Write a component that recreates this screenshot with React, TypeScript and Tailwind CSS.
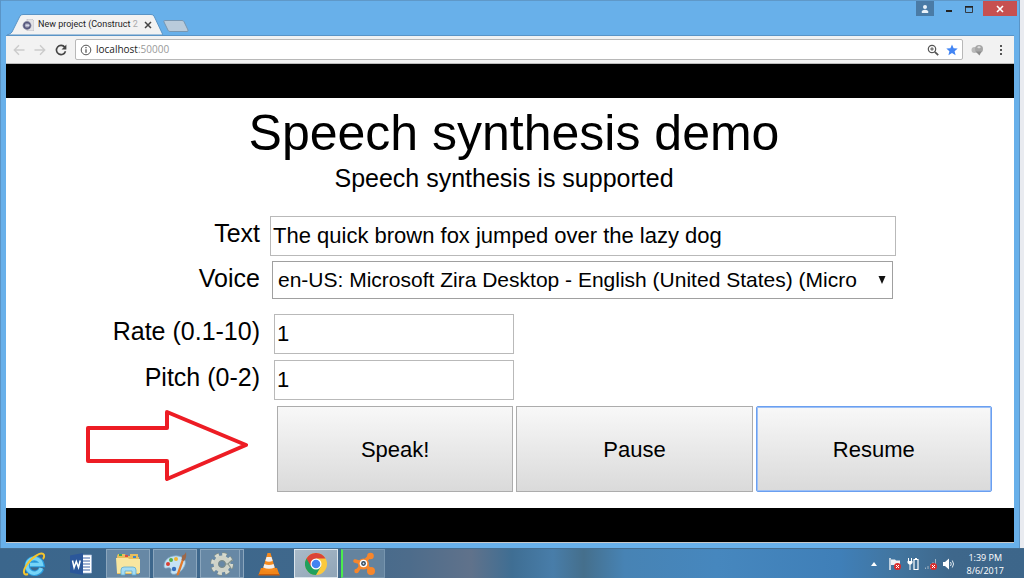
import type { ReactNode } from "react";

const labelClass = "w-[254px] shrink-0 text-right text-[25px] leading-[34px]";
const fieldClass =
  "h-10 border border-[#b9b9b9] bg-white px-0.5 text-[22px] text-black outline-none";
const buttonClass =
  "h-[86px] flex-1 border bg-linear-to-b from-[#f8f8f8] to-[#dadada] text-[22px]";

function TitleBar() {
  return (
    <div className="flex h-[35px] border-t border-[#5f98c8]">
      <div className="flex flex-1 items-end pl-[6px]">
        <div className="relative flex h-[21px] w-[156px] items-center pl-[15px]">
          <svg
            className="absolute inset-0 h-full w-full"
            viewBox="0 0 156 21"
            preserveAspectRatio="none"
          >
            <path
              d="M0 21 Q4 20 5 18 L13 2 Q14 .5 16 .5 H144 Q146 .5 147 2 L156 21Z"
              fill="#f2f2f2"
              stroke="#5a94c6"
            />
          </svg>
          <svg className="relative h-3 w-3" viewBox="0 0 12 12">
            <path d="M5 0h5l2 2v10H5z" fill="#e2e2e5" stroke="#b4b4b8" strokeWidth=".6" />
            <circle cx="5" cy="6.5" r="4.4" fill="#8b8ca3" />
            <circle cx="5" cy="6.5" r="3" fill="none" stroke="#50527a" strokeWidth="1.2" />
            <path d="M3.500 5.400h4v2h-4z" fill="#d6d8ea" />
          </svg>
          <span className="relative ml-1 w-[106px] font-[Roboto,sans-serif] text-[9px] whitespace-nowrap text-[#222]">
            New project (Construct <span className="text-[#aaa]">2</span>
          </span>
          <button aria-label="Close tab" className="relative">
            <svg className="h-2 w-2" viewBox="0 0 8 8">
              <path d="M1 1l6 6M7 1L1 7" stroke="#444" strokeWidth="1.5" />
            </svg>
          </button>
        </div>
        <button aria-label="New tab" className="mb-[3px]">
          <svg className="h-3 w-[26px]" viewBox="0 0 26 12">
            <path
              d="M1.500 .5H19q1.500 0 2 1.200l4 8.300q.5 1.500-1 1.500H7q-1.500 0-2-1.300L1 2q-.5-1.500.5-1.500z"
              fill="#b9cbdb"
              stroke="#7897b2"
            />
          </svg>
        </button>
      </div>
      <button
        aria-label="Profile"
        className="mr-[9px] flex h-[15px] w-[18px] items-center justify-center bg-[#4a7ba6]"
      >
        <svg className="h-2 w-2" viewBox="0 0 8 8" fill="#eaf2f9">
          <circle cx="4" cy="2.1" r="2" />
          <path d="M.8 8V6.500Q1 4.700 4 4.700t3.200 1.800V8z" />
        </svg>
      </button>
      <button aria-label="Minimize" className="flex h-[15px] w-3 items-center justify-center">
        <svg className="h-2 w-2" viewBox="0 0 8 8">
          <path d="M1 5h6v2H1z" fill="#222" />
        </svg>
      </button>
      <button aria-label="Maximize" className="mx-2 flex h-[15px] w-3 items-center justify-center">
        <svg className="h-2 w-2" viewBox="0 0 8 8">
          <path d="M.5 2h7v5.500h-7z" fill="none" stroke="#333b44" />
          <path d="M0 1h8v1.500H0z" fill="#222" />
        </svg>
      </button>
      <button
        aria-label="Close"
        className="mr-[2px] flex h-[15px] w-[34px] items-center justify-center bg-[#c75050]"
      >
        <svg className="h-2 w-2" viewBox="0 0 8 8">
          <path d="M1 1l6 6M7 1L1 7" stroke="#fff" strokeWidth="1.6" />
        </svg>
      </button>
    </div>
  );
}

function Toolbar() {
  return (
    <div className="flex h-[29px] items-center border-t border-b border-t-[#5a94c6] border-b-[#bcbcbc] bg-[#f2f2f2] px-[7px]">
      <button aria-label="Back" className="mr-[9px]">
        <svg className="h-3 w-3" viewBox="0 0 12 12" fill="none" stroke="#cbcbcb" strokeWidth="1.400">
          <path d="M11.500 6H1.500M6 1.300L1.300 6 6 10.700" />
        </svg>
      </button>
      <button aria-label="Forward" className="mr-[9px]">
        <svg className="h-3 w-3" viewBox="0 0 12 12" fill="none" stroke="#cbcbcb" strokeWidth="1.400">
          <path d="M.5 6h10M6 1.300L10.700 6 6 10.700" />
        </svg>
      </button>
      <button aria-label="Reload" className="mr-2">
        <svg className="h-3 w-3" viewBox="0 0 12 12">
          <path d="M9.800 3.300A4.600 4.600 0 1 0 10.500 7.200" fill="none" stroke="#444" strokeWidth="1.600" />
          <path d="M11.400 .6v4.800H6.600z" fill="#444" />
        </svg>
      </button>
      <div className="flex h-[21px] flex-1 items-center rounded-xs border border-[#b8b8b8] bg-white px-1">
        <svg className="h-3 w-3" viewBox="0 0 12 12" fill="none" stroke="#555">
          <circle cx="6" cy="6" r="4.800" />
          <path d="M6 5.300v3.500M6 3v1.300" strokeWidth="1.300" />
        </svg>
        <div className="ml-1 flex-1 font-['Open_Sans',sans-serif] text-[10px] text-[#999]">
          <span className="text-[#222]">localhost</span>:50000
        </div>
        <button aria-label="Zoom" className="mr-[7px]">
          <svg className="h-3 w-3" viewBox="0 0 12 12" fill="none" stroke="#555">
            <circle cx="5" cy="5" r="3.700" strokeWidth="1.200" />
            <path d="M7.800 7.800l3.400 3.400" strokeWidth="1.700" />
            <path d="M3.200 5h3.600M5 3.200v3.600" />
          </svg>
        </button>
        <button aria-label="Bookmark">
          <svg className="h-3 w-3" viewBox="0 0 12 12">
            <path
              d="M6 .4l1.600 3.800 4.100.3-3.100 2.700 1 4L6 9l-3.600 2.200 1-4L.3 4.500l4.100-.3z"
              fill="#4285f4"
            />
          </svg>
        </button>
      </div>
      <button aria-label="Extension" className="ml-2">
        <svg className="h-3 w-3" viewBox="0 0 12 12">
          <circle cx="3.500" cy="6" r="3" fill="#b9b9b9" />
          <circle cx="8" cy="5" r="4" fill="#a6a6a6" />
          <path d="M4.500 7.500l4 4 2-4z" fill="#8b8b8b" />
          <path d="M6 3.200l2-1.200 2 1.200-2 1.300z" fill="#ddd" />
        </svg>
      </button>
      <button aria-label="Menu" className="ml-3">
        <svg className="h-3 w-3" viewBox="0 0 12 12" fill="#555">
          <path d="M5 1h2v2H5zM5 5h2v2H5zM5 9h2v2H5z" />
        </svg>
      </button>
    </div>
  );
}

function Demo() {
  return (
    <main className="flex-1 bg-white pt-[5px] pb-[15px] font-['Liberation_Sans',Arial,sans-serif] text-black">
      <h1 className="pl-2 text-center text-[50px] leading-[60px]">Speech synthesis demo</h1>
      <p className="pr-3 text-center text-[25px] leading-[30px]">Speech synthesis is supported</p>

      <div className="mt-[23px] flex">
        <label htmlFor="text" className={labelClass}>
          Text
        </label>
        <input
          id="text"
          type="text"
          defaultValue="The quick brown fox jumped over the lazy dog"
          className={`${fieldClass} mr-[118px] ml-2.5 min-w-0 flex-1`}
        />
      </div>
      <div className="mt-[5px] flex">
        <label htmlFor="voice" className={labelClass}>
          Voice
        </label>
        <div className="relative mr-[121px] ml-3 min-w-0 flex-1">
          <select
            id="voice"
            className="h-[38px] w-full appearance-none border border-[#a0a0a0] bg-white pr-5 pl-[5px] text-[21px] outline-none"
          >
            <option>en-US: Microsoft Zira Desktop - English (United States) (Micro</option>
          </select>
          <svg
            className="pointer-events-none absolute top-[15px] right-[7px] h-2 w-2"
            viewBox="0 0 8 8"
          >
            <path d="M.5 0h7L4 8z" fill="#111" />
          </svg>
        </div>
      </div>
      <div className="mt-[15px] flex">
        <label htmlFor="rate" className={labelClass}>
          Rate (0.1-10)
        </label>
        <input id="rate" type="text" defaultValue="1" className={`${fieldClass} ml-3.5 w-60`} />
      </div>
      <div className="mt-1.5 flex">
        <label htmlFor="pitch" className={labelClass}>
          Pitch (0-2)
        </label>
        <input id="pitch" type="text" defaultValue="1" className={`${fieldClass} ml-3.5 w-60`} />
      </div>

      <div className="mt-1.5 flex">
        <div className="flex w-[254px] shrink-0 justify-end pt-1 pr-3">
          <svg className="h-[71px] w-[162px]" viewBox="0 0 162 71">
            <path
              d="M2 18H81V2L160 35L81 69V51H2Z"
              fill="none"
              stroke="#ed1c24"
              strokeWidth="4"
              strokeLinejoin="round"
            />
          </svg>
        </div>
        <div className="mr-[22px] ml-[17px] flex flex-1 gap-[3px]">
          <button className={`${buttonClass} border-[#acacac]`}>Speak!</button>
          <button className={`${buttonClass} border-[#acacac]`}>Pause</button>
          <button className={`${buttonClass} rounded-xs border-[#6a9ff0] ring-1 ring-[#9dc0f6] ring-inset`}>
            Resume
          </button>
        </div>
      </div>
    </main>
  );
}

function TaskButton({
  label,
  state = "",
  children,
}: {
  label: string;
  state?: string;
  children: ReactNode;
}) {
  return (
    <button aria-label={label} className={`flex h-[29px] w-11 items-center justify-center ${state}`}>
      {children}
    </button>
  );
}

function Taskbar() {
  const open = "border border-[#8ba6bd] bg-[#6788a5]";
  return (
    <footer className="flex h-[30px] items-center gap-[3px] border-t border-[#466d8e] bg-[linear-gradient(90deg,#3b668c_0%,#3f688c_30%,#4d6c8b_40%,#60728b_46%,#3f6e93_50%,#487da9_54%,#456f8c_57%,#4783b4_61%,#4687be_70%,#3f7fb8_82%,#42749d_88%,#3e678b_93%,#3d668a_100%)] pl-3 font-['Open_Sans',sans-serif]">
      <TaskButton label="Internet Explorer">
        <svg className="h-6 w-6" viewBox="0 0 24 24" fill="none">
          <path d="M19.500 16.500A7.300 7.300 0 1 1 19.800 12.500H8" stroke="#2a9bdc" strokeWidth="5.500" />
          <path d="M19.300 16A7.300 7.300 0 1 1 19.500 12.500H8" stroke="#75d4f7" strokeWidth="3.500" />
          <path
            d="M6 22C1 24 .5 19 5 12.500 11 4 20-1 22 3q.7 2-1 4"
            stroke="#f5c52c"
            strokeWidth="2"
          />
        </svg>
      </TaskButton>
      <TaskButton label="Word">
        <svg className="h-[22px] w-[22px]" viewBox="0 0 22 22">
          <path d="M12 2h9.500v18H12z" fill="#fff" stroke="#a9bfdf" strokeWidth=".7" />
          <path d="M13 5h7M13 8h7M13 11h7M13 14h7M13 17h7" stroke="#3e64a8" />
          <path d="M0 2.500L13 0v22L0 19.500z" fill="#2b579a" />
          <path d="M2.500 7.500l1.600 7 2.200-6 2.200 6 1.700-7" fill="none" stroke="#fff" strokeWidth="1.500" />
        </svg>
      </TaskButton>
      <TaskButton label="File Explorer" state={open}>
        <svg className="h-6 w-[26px]" viewBox="0 0 26 24">
          <path d="M2 4l1-2h7l1 2h4V2h8v3h1v17H2z" fill="#e8bd5c" />
          <path d="M4 2h3v2H4z" fill="#39a85a" />
          <path d="M10 3h3v2h-3z" fill="#da4c42" />
          <path d="M18 4h3v2h-3z" fill="#3e87c8" />
          <path d="M1 6h12l1 1h11v14H2z" fill="#f8e6a0" />
          <path
            d="M6 23v-5q0-3 3-3h9q3 0 3 3v5h-4v-4h-7v4z"
            fill="#a5dcf3"
            stroke="#5ea9d0"
            strokeWidth=".8"
          />
        </svg>
      </TaskButton>
      <TaskButton label="Paint" state={open}>
        <svg className="h-6 w-6" viewBox="0 0 24 24">
          <path
            d="M1 14C1 7 8 3 15 4c7 1 9 6 6 11-3 6-9 8-12 7-3-2 1-4-2-6-2-1-6 2-6-2z"
            fill="#c5e2f4"
            stroke="#7ba8c8"
            strokeWidth=".8"
          />
          <circle cx="5" cy="12" r="2" fill="#d83f33" />
          <circle cx="8" cy="8" r="2" fill="#56ae48" />
          <circle cx="13" cy="7" r="2" fill="#efb532" />
          <circle cx="11" cy="17" r="2.200" fill="#356fbe" />
          <path d="M13.500 22.500L19 7l2 1-5 14.500q-1.500 2-2.500 0z" fill="#e27a2b" />
          <path d="M18.500 8l1-5q2 1 3.500-3 1 6-2 9z" fill="#9d6848" />
        </svg>
      </TaskButton>
      <TaskButton label="Settings" state={`${open} shadow-[inset_-3px_0_#56799a,inset_-4px_0_#8ba6bd]`}>
        <svg className="h-6 w-6" viewBox="0 0 24 24">
          <circle cx="12" cy="12" r="9.500" fill="none" stroke="#7e8d87" strokeWidth="4.500" strokeDasharray="4.300 3.160" />
          <circle cx="12" cy="12" r="9.300" fill="none" stroke="#d7dacf" strokeWidth="3.500" strokeDasharray="4 3.300" />
          <circle cx="12" cy="12" r="6" fill="none" stroke="#cfd3c8" strokeWidth="5" />
          <circle cx="12" cy="12" r="3.500" fill="#6788a5" stroke="#7e8d87" />
          <path d="M15 12h3l4-4M18 12l3 4" fill="none" stroke="#84938d" strokeWidth="1.200" />
        </svg>
      </TaskButton>
      <TaskButton label="VLC media player">
        <svg className="h-6 w-6" viewBox="0 0 24 24">
          <path d="M4 16h16l2.500 7h-21z" fill="#f08519" />
          <path d="M10.500 1h3l5 17q-6.500 4-13 0z" fill="#f58a1e" />
          <path d="M9.500 5h5l1.200 4q-3.700 1.500-7.400 0zM7.400 12q4.600 2 9.200 0l1.100 3.600q-5.700 2.500-11.400 0z" fill="#f0efed" />
          <path d="M1.500 22h21v1.500h-21z" fill="#c95d0b" />
        </svg>
      </TaskButton>
      <TaskButton label="Chrome" state="border border-[#dbe5ec] bg-linear-to-br from-[#a9bac8] to-[#90a5b7]">
        <svg className="h-[22px] w-[22px]" viewBox="0 0 22 22">
          <circle cx="11" cy="11" r="11" fill="#fbc93d" />
          <path d="M1.470 5.500A11 11 0 0 0 11 22l4.760-8.250L11 11z" fill="#20a05d" />
          <path d="M1.470 5.500L6.200 13.700 11 9V5.500h9.530A11 11 0 0 0 1.470 5.500z" fill="#da4437" />
          <circle cx="11" cy="11" r="5.500" fill="#fff" />
          <circle cx="11" cy="11" r="4.300" fill="#4483f1" />
        </svg>
      </TaskButton>
      <TaskButton label="Avast" state="border border-l-2 border-[#7795ae] border-l-[#4cec4e] bg-[#64839e]">
        <svg className="h-6 w-6" viewBox="0 0 24 24">
          <path
            d="M3 9l7 2M9 14l-4 5M13 9l6-6M14 13l5 6"
            stroke="#f7862b"
            strokeWidth="3.500"
            strokeLinecap="round"
          />
          <circle cx="11.500" cy="12" r="5.500" fill="#f7862b" />
          <circle cx="18.500" cy="4" r="3.300" fill="#f7862b" />
          <circle cx="19" cy="19" r="4" fill="#f7862b" />
          <circle cx="4.500" cy="19" r="2.200" fill="#f7862b" />
          <circle cx="11.500" cy="11.500" r="3.800" fill="#fff" />
          <circle cx="11.500" cy="11.500" r="2.400" fill="#34495e" />
          <circle cx="11.500" cy="11.500" r="1" fill="#cfe0ef" />
        </svg>
      </TaskButton>

      <div className="ml-auto flex items-center gap-1.5 pr-5">
        <button aria-label="Show hidden icons" className="mr-1.5">
          <svg className="h-1 w-1.5" viewBox="0 0 6 4">
            <path d="M0 4l3-4 3 4z" fill="#fff" />
          </svg>
        </button>
        <svg className="h-3 w-3" viewBox="0 0 12 12">
          <path d="M1 0v12" stroke="#fff" strokeWidth="1.300" />
          <path d="M2 1.500h4l1 1h4V8H6L5 7H2z" fill="#edf1f4" />
          <circle cx="8.500" cy="8.500" r="3.500" fill="#d92c2c" />
          <path d="M7 7l3 3M10 7l-3 3" stroke="#fff" />
        </svg>
        <svg className="h-3 w-3" viewBox="0 0 12 12" fill="none" stroke="#fff">
          <path d="M1.500 0v3M4.500 0v3M3 6v6" />
          <path d="M.5 3h5v2L4 6.500H2L.5 5z" fill="#fff" stroke="none" />
          <path d="M7 1.500h4v10H7zM8 .5h2" strokeWidth="1.200" />
        </svg>
        <svg className="h-3 w-3" viewBox="0 0 12 12">
          <path d="M.5 11V9.500M3 11V8M5.500 11V6M8 11V4M10.500 11V1" stroke="#9fb3c4" />
          <circle cx="8.500" cy="8.500" r="3.500" fill="#d92c2c" />
          <path d="M7 7l3 3M10 7l-3 3" stroke="#fff" />
        </svg>
        <svg className="h-3 w-3" viewBox="0 0 12 12">
          <path d="M0 4h2l4-3.500v11L2 8H0z" fill="#fff" />
          <path d="M7.500 4q1.500 2 0 4M9.300 2.500q2.500 3.500 0 7" fill="none" stroke="#e2ebf2" />
        </svg>
        <div className="ml-1.5 text-center text-[9px] leading-[13px] text-white">
          <div>1:39 PM</div>
          <div>8/6/2017</div>
        </div>
      </div>
    </footer>
  );
}

export default function App() {
  return (
    <div className="flex min-h-screen flex-col bg-[#e9ebf0]">
      <div className="mr-1 flex flex-1 flex-col border-r border-l border-[#5a94c6] bg-[#68b0ea]">
        <TitleBar />
        <div className="mx-[5px] mb-[5px] flex flex-1 flex-col border-b border-[#c8c8c8]">
          <Toolbar />
          <div className="h-[34px] bg-black" />
          <Demo />
          <div className="h-[34px] bg-black" />
        </div>
      </div>
      <Taskbar />
    </div>
  );
}
